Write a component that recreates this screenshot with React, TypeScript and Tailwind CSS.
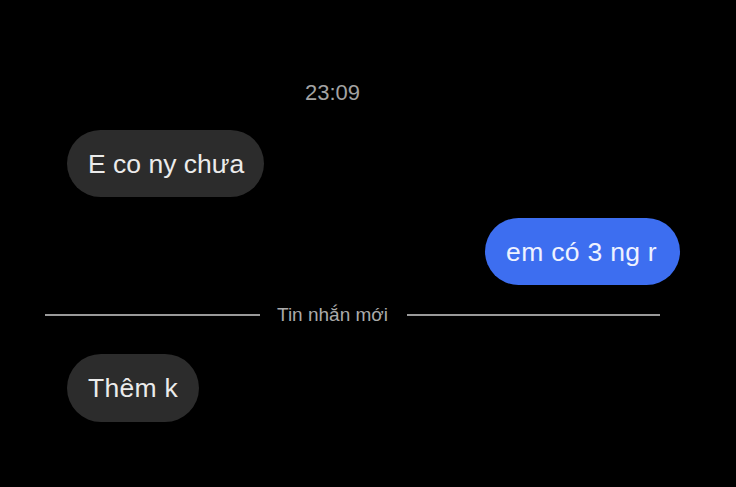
import React from "react";

export default function App() {
  const font = { fontFamily: '"Liberation Sans", Arial, sans-serif' };
  return (
    <div className="w-[736px] h-[487px] bg-black overflow-hidden flex flex-col" style={font}>
      <div className="mt-[80px] w-[665px] text-center text-[22px] leading-[25px] text-[#a3a3a3]">
        23:09
      </div>
      <div className="mt-[25px] pl-[67px] flex">
        <div className="h-[67px] pl-[21px] pr-[20px] flex items-center rounded-full bg-[#2c2c2c] text-[#ebebeb] text-[26.5px] leading-[30px]">
          E co ny chưa
        </div>
      </div>
      <div className="mt-[21px] pr-[56px] flex justify-end">
        <div className="h-[67px] pl-[21px] pr-[23px] flex items-center rounded-full bg-[#3d6ef0] text-[#eef2ff] text-[26.5px] tracking-[0.3px] leading-[30px]">
          em có 3 ng r
        </div>
      </div>
      <div className="mt-[20px] h-[20px] pl-[45px] flex items-center">
        <div className="w-[215px] h-[2px] bg-[#9a9a9a]" />
        <div className="ml-[17px] mr-[19px] text-[19px] leading-[20px] text-[#ababab]">Tin nhắn mới</div>
        <div className="w-[253px] h-[2px] bg-[#9a9a9a]" />
      </div>
      <div className="mt-[29px] pl-[67px] flex">
        <div className="h-[68px] px-[21px] flex items-center rounded-full bg-[#2c2c2c] text-[#ebebeb] text-[26.5px] tracking-[0.3px] leading-[30px]">
          Thêm k
        </div>
      </div>
    </div>
  );
}
